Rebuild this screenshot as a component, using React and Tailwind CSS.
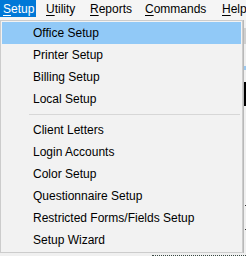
const menuBar = [
  { key: 'S', rest: 'etup', w: 'w-[36px]', active: true },
  { key: 'U', rest: 'tility', w: 'w-[44px] ml-[7px]' },
  { key: 'R', rest: 'eports', w: 'w-[55px]' },
  { key: 'C', rest: 'ommands', w: 'w-[77px]' },
  { key: 'H', rest: 'elp', w: 'w-[40px]' },
];

const groups = [
  ['Office Setup', 'Printer Setup', 'Billing Setup', 'Local Setup'],
  [
    'Client Letters',
    'Login Accounts',
    'Color Setup',
    'Questionnaire Setup',
    'Restricted Forms/Fields Setup',
    'Setup Wizard',
  ],
];

const MenuItem = ({ label, selected }) => (
  <div
    className={`h-[22px] flex items-center pl-[31px] text-black ${
      selected ? 'bg-[#91c9f7]' : ''
    }`}
  >
    {label}
  </div>
);

export default function App() {
  return (
    <div
      className="w-[246px] h-[256px] overflow-hidden bg-[#f0f0f0] text-[12px] leading-none"
      style={{ fontFamily: '"Liberation Sans", Arial, sans-serif' }}
    >
      {/* Menu bar */}
      <div className="h-[20px] flex items-start bg-[#f5f5f5] whitespace-nowrap">
        {menuBar.map((m) => (
          <div
            key={m.key}
            className={`${m.w} shrink-0 h-[17px] flex items-center pl-[3px] ${
              m.active ? 'bg-[#0078d7] text-white' : 'text-black'
            }`}
          >
            <span className="underline underline-offset-[2px] decoration-1">{m.key}</span>
            <span>{m.rest}</span>
          </div>
        ))}
      </div>

      <div className="flex">
        {/* Dropdown */}
        <div className="w-[243px] h-[233px] shrink-0 border border-[#cccccc] bg-[#f2f2f2] p-px">
          {groups.map((g, gi) => (
            <div key={gi}>
              {gi > 0 && (
                <div className="h-[9px] flex items-center pl-[27px] pr-px">
                  <div className="h-px w-full bg-[#d7d7d7]" />
                </div>
              )}
              {g.map((label, i) => (
                <MenuItem key={label} label={label} selected={gi === 0 && i === 0} />
              ))}
            </div>
          ))}
        </div>

        {/* Sliver of the window behind */}
        <div className="w-[3px] h-[233px] shrink-0 flex flex-col border-l border-[#b8b8b8] bg-[#f0f0f0]">
          <div className="h-[8px]" />
          <div className="h-[16px] bg-[#d0d0d0]" />
          <div className="h-[22px]" />
          <div className="h-[4px] bg-[#9cc8ee]" />
          <div className="h-[12px]" />
          <div className="h-[24px] bg-black" />
          <div className="h-[99px]" />
          <div className="h-px w-px ml-px bg-[#333]" />
          <div className="h-[23px]" />
          <div className="h-px w-px ml-px bg-[#333]" />
        </div>
      </div>

      {/* Below the menu */}
      <div className="h-[3px] flex items-end">
        <div className="w-[152px]" />
        <div className="flex-1 border-b border-dotted border-[#3a4a44]" />
      </div>
    </div>
  );
}
